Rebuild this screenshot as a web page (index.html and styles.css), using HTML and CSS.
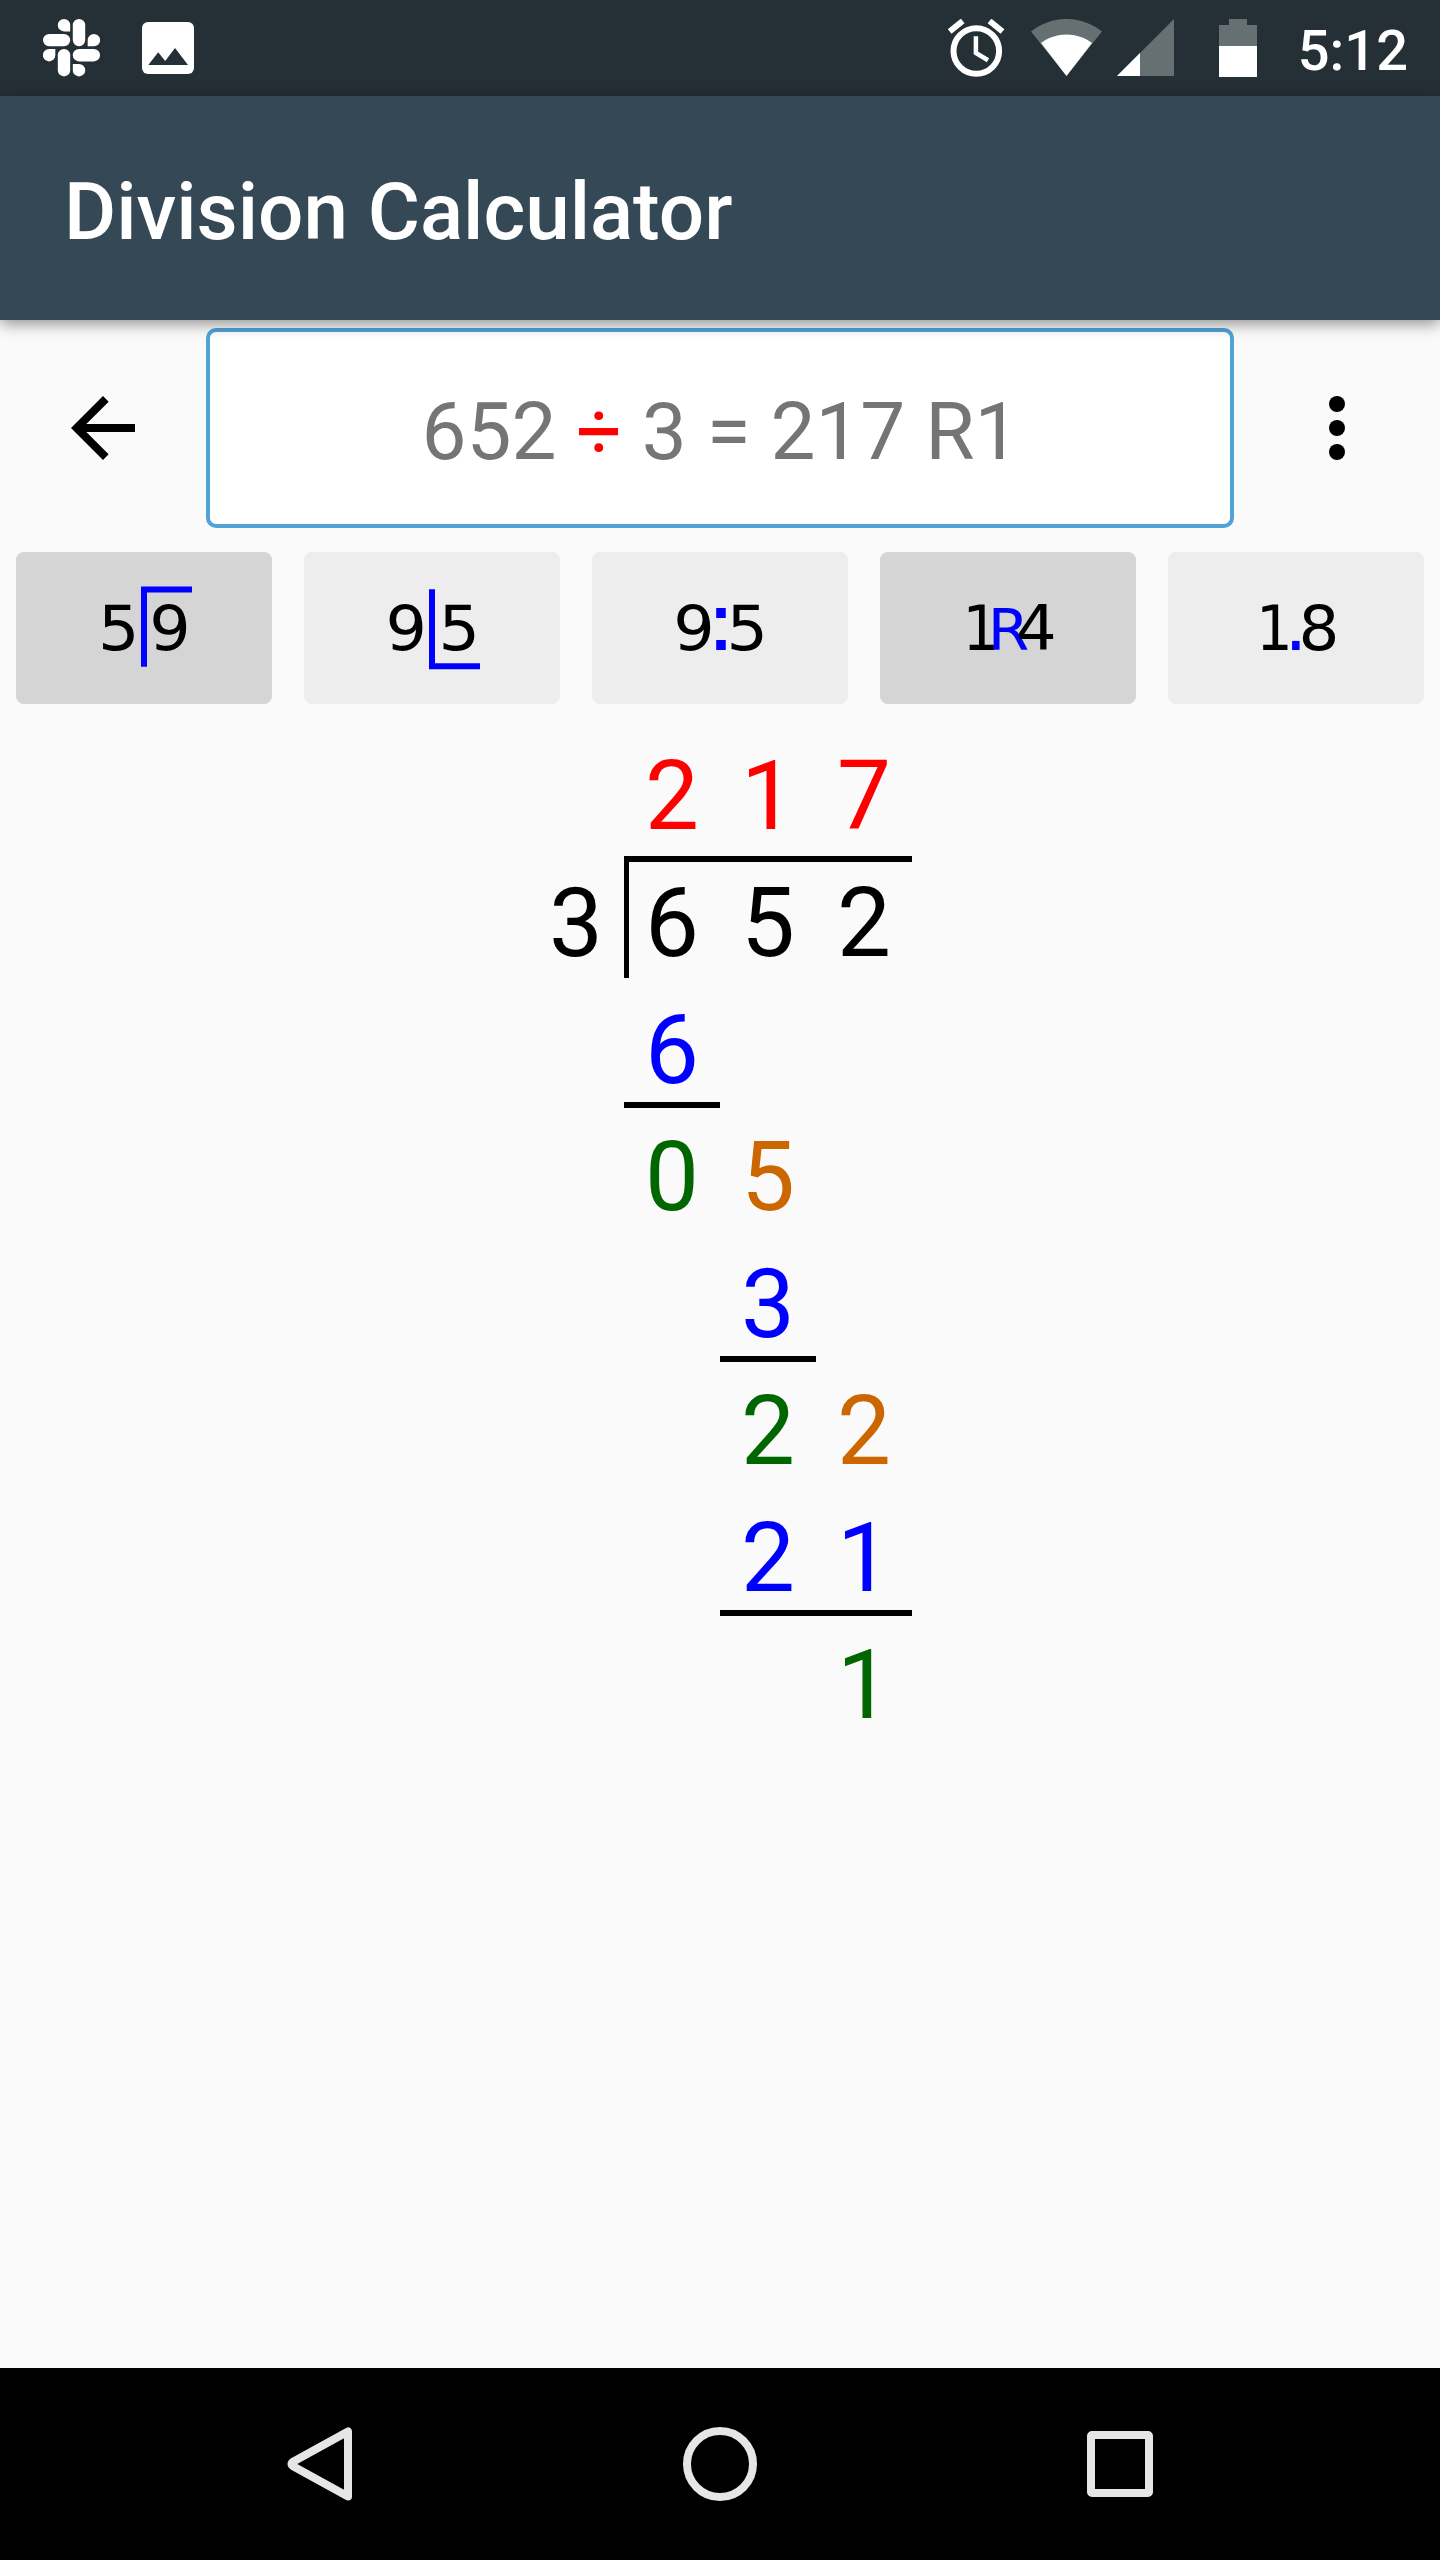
FILE: index.html
```html
<!DOCTYPE html>
<html lang="en">
<head>
<meta charset="utf-8">
<title>Division Calculator</title>
<link rel="stylesheet" href="styles.css">
</head>
<body>
<header class="status">
  <div class="status-left">
    <svg class="slack" viewBox="0 0 57 58" width="57" height="58" fill="#fff"><rect x="29.8" y="0" width="12.4" height="27.3" rx="6.2"/><path d="M27.2 12.4H21A6.2 6.2 0 1 1 27.2 6.2z"/><rect x="29.8" y="30" width="27.2" height="12.4" rx="6.2"/><path d="M44.7 27.3v-6.2a6.2 6.2 0 1 1 6.2 6.2z"/><rect x="14.8" y="30" width="12.4" height="27.4" rx="6.2"/><path d="M29.8 45H36a6.2 6.2 0 1 1-6.2 6.2z"/><rect x="0" y="14.9" width="27.2" height="12.4" rx="6.2"/><path d="M12.3 30v6.2A6.2 6.2 0 1 1 6.1 30z"/></svg>
    <svg viewBox="0 0 52 52" width="52" height="52"><rect width="52" height="52" rx="6" fill="#fff"/><path d="M6.3 43 16.2 30.300l7 8.700L33 26l13 17z" fill="#252f36"/></svg>
  </div>
  <div class="status-right">
    <svg class="alarm" viewBox="0 0 57 58" width="57" height="58" fill="none" stroke="#fff"><circle cx="28.300" cy="32" r="22.800" stroke-width="6"/><path d="M27.900 17.300V34L40 41.200" stroke-width="4.500"/><path d="M1.700 12.500 14.700 2M41.500 2l13 10.500" stroke-width="6"/></svg>
    <svg class="wifi" viewBox="0 0 71 57" width="71" height="57"><path d="M35.500 57 0 12.500C21-4.200 50-4.200 71 12.500z" fill="#667073"/><path d="M35.500 57 10 24C25 12.500 46 12.500 61 24z" fill="#fff"/></svg>
    <svg class="cell" viewBox="0 0 57 57" width="57" height="57"><path d="M57 0v57H0z" fill="#667073"/><path d="M23 34v23H0z" fill="#fff"/></svg>
    <svg class="battery" viewBox="0 0 38 58" width="38" height="58"><path d="M10 0h18v6h10v22H0V6h10z" fill="#667073"/><path d="M0 27h38v31H0z" fill="#fff"/></svg>
    <span class="clock">5:12</span>
  </div>
</header>
<div class="appbar"><h1 class="title">Division Calculator</h1></div>
<main class="content">
  <div class="entry">
    <svg viewBox="0 0 24 24" width="96" height="96"><path d="M20 11H7.830l5.590-5.590L12 4l-8 8 8 8 1.410-1.410L7.830 13H20z"/></svg>
    <div class="expression"><span>652 <span class="op">÷</span> 3 = 217 R1</span></div>
    <svg viewBox="0 0 24 24" width="96" height="96"><circle cx="12" cy="6" r="2"/><circle cx="12" cy="12" r="2"/><circle cx="12" cy="18" r="2"/></svg>
  </div>
  <div class="modes">
    <button class="mode on"><svg viewBox="0 0 256 152"><text x="82" y="98" textLength="41.5" lengthAdjust="spacingAndGlyphs">5</text><text x="133.2" y="98" textLength="41.5" lengthAdjust="spacingAndGlyphs">9</text><path class="rule" d="M128 114.700V37.500h48"/></svg></button>
    <button class="mode"><svg viewBox="0 0 256 152"><text x="81.5" y="98" textLength="41.5" lengthAdjust="spacingAndGlyphs">9</text><text x="134.6" y="98" textLength="41.5" lengthAdjust="spacingAndGlyphs">5</text><path class="rule" d="M128 37.300v76.900h48"/></svg></button>
    <button class="mode"><svg viewBox="0 0 256 152"><text x="81.3" y="98" textLength="41.5" lengthAdjust="spacingAndGlyphs">9</text><text class="blue colon" x="113.2" y="98" textLength="31.4" lengthAdjust="spacingAndGlyphs">:</text><text x="134.6" y="98" textLength="41.5" lengthAdjust="spacingAndGlyphs">5</text></svg></button>
    <button class="mode on"><svg viewBox="0 0 256 152"><text x="82.6" y="98" textLength="36.8" lengthAdjust="spacingAndGlyphs">1</text><text class="blue r" x="107.8" y="98" textLength="41.6" lengthAdjust="spacingAndGlyphs">R</text><text x="135.9" y="98" textLength="40.7" lengthAdjust="spacingAndGlyphs">4</text></svg></button>
    <button class="mode"><svg viewBox="0 0 256 152"><text x="87.9" y="98" textLength="36.8" lengthAdjust="spacingAndGlyphs">1</text><text class="blue point" x="116.2" y="98">.</text><text x="130.6" y="98" textLength="40.9" lengthAdjust="spacingAndGlyphs">8</text></svg></button>
  </div>
  <div class="work">
    <b class="c2 red">2</b><b class="c3 red">1</b><b class="c4 red">7</b>
    <b class="c1 r2">3</b><div class="bracket r2"><b>6</b><b>5</b><b>2</b></div>
    <b class="c2 r3 blue under">6</b>
    <b class="c2 r4 green">0</b><b class="c3 r4 orange">5</b>
    <b class="c3 r5 blue under">3</b>
    <b class="c3 r6 green">2</b><b class="c4 r6 orange">2</b>
    <b class="c3 r7 blue under">2</b><b class="c4 r7 blue under">1</b>
    <b class="c4 r8 green">1</b>
  </div>
</main>
<nav class="nav">
  <svg viewBox="0 0 76 76" width="76" height="76"><path d="M66 5.500v65L11.500 40.500q-4-2.500 0-5z"/></svg>
  <svg viewBox="0 0 76 76" width="76" height="76"><circle cx="38" cy="38" r="33"/></svg>
  <svg viewBox="0 0 76 76" width="76" height="76"><rect x="9" y="9" width="58" height="58" rx="1"/></svg>
</nav>
</body>
</html>
```
FILE: styles.css
```css
* { box-sizing: border-box; }
body {
  margin: 0;
  width: 1440px;
  height: 2560px;
  display: flex;
  flex-direction: column;
  background: #fafafa;
  font-family: Roboto, sans-serif;
  overflow: hidden;
}
svg { display: block; flex: none; }
.status {
  height: 96px;
  display: flex;
  justify-content: space-between;
  align-items: flex-start;
  background: #252f36;
  color: #fff;
}
.status-left { display: flex; padding: 19px 0 0 43px; gap: 42px; }
.status-left svg + svg { margin-top: 3px; }
.status-right { display: flex; padding: 19px 32px 0 0; }
.wifi { margin-left: 26px; }
.cell { margin-left: 15px; }
.battery { margin-left: 45px; }
.clock {
  margin-left: 41px;
  font-size: 56px;
  line-height: 64px;
  font-weight: 500;
}
.appbar {
  height: 224px;
  padding: 7px 0 0 64px;
  display: flex;
  align-items: center;
  background: #354855;
  box-shadow: 0 4px 14px rgba(0, 0, 0, .42);
  z-index: 1;
}
.title { margin: 0; color: #fff; font-size: 80px; font-weight: 500; line-height: 94px; letter-spacing: -.03px; }
.content { flex: 1; }
.entry {
  display: flex;
  justify-content: space-between;
  align-items: center;
  padding: 8px 55px 0;
}
.expression {
  width: 1028px;
  height: 200px;
  display: flex;
  align-items: center;
  justify-content: center;
  border: 4px solid #4fa3d7;
  border-radius: 10px;
  background: #fff;
  color: #757575;
  font-size: 80px;
  padding: 7px 0 0 1px;
  white-space: nowrap;
}
.op { color: #f00; }
.modes { display: flex; gap: 32px; padding: 24px 16px 0; }
.mode { width: 256px; height: 152px; padding: 0; border: 0; border-radius: 8px; background: #ededed; }
.mode.on { background: #d5d5d5; }
.mode text { font: 61.5px "DejaVu Sans", sans-serif; }
.mode text.blue { fill: #00f; }
.mode text.r { font-size: 57px; }
.mode text.colon { font-size: 81px; }
.mode text.point { font-size: 73px; }
.rule { fill: none; stroke: #00f; stroke-width: 6; }
.work {
  display: grid;
  grid-template-columns: repeat(4, 96px);
  grid-template-rows: repeat(8, 127px);
  justify-content: center;
  padding-top: 29px;
}
.work b { font-size: 96px; font-weight: 400; line-height: 127px; text-align: center; }
.c1 { grid-column: 1; }
.c2 { grid-column: 2; }
.c3 { grid-column: 3; }
.c4 { grid-column: 4; }
.r2 { grid-row: 2; }
.r3 { grid-row: 3; }
.r4 { grid-row: 4; }
.r5 { grid-row: 5; }
.r6 { grid-row: 6; }
.r7 { grid-row: 7; }
.r8 { grid-row: 8; }
/* The bracket's top bar rises slightly into the quotient row. */
.bracket {
  grid-column: 2 / 5;
  display: grid;
  grid-template-columns: repeat(3, 96px);
  margin-top: -4px;
  padding-top: 4px;
  background: linear-gradient(#000, #000) 0 0 / 288px 6px no-repeat,
    linear-gradient(#000, #000) 0 0 / 5px 122px no-repeat;
}
.under { background: linear-gradient(#000, #000) 0 115px / 96px 6px no-repeat; }
.red { color: #f00; }
.blue { color: #00f; }
.green { color: #060; }
.orange { color: #cc6600; }
.nav {
  height: 192px;
  display: flex;
  align-items: center;
  justify-content: center;
  gap: 324px;
  background: #000;
}
.nav svg { fill: none; stroke: #e6e6e6; stroke-width: 8; stroke-linejoin: round; }
```
